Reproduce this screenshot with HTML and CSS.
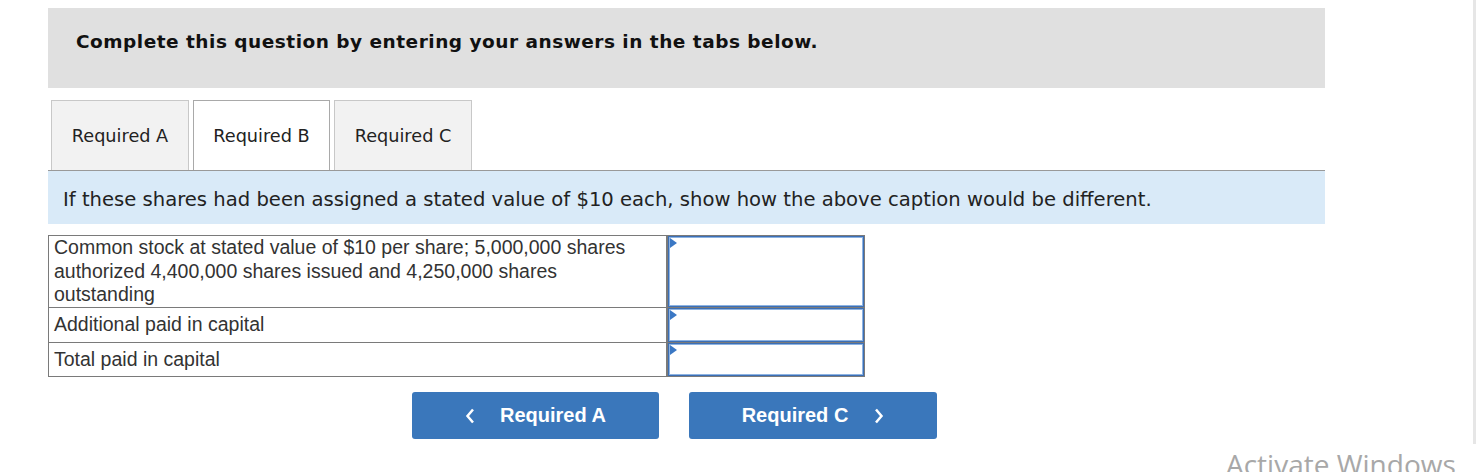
FILE: index.html
```html
<!DOCTYPE html>
<html>
<head>
<meta charset="utf-8">
<link rel="stylesheet" href="styles.css">
</head>
<body>
<div class="page">
  <div class="header">Complete this question by entering your answers in the tabs below.</div>
  <div class="tabs">
    <div class="tab">Required A</div>
    <div class="tab active">Required B</div>
    <div class="tab">Required C</div>
  </div>
  <div class="info">If these shares had been assigned a stated value of $10 each, show how the above caption would be different.</div>
  <table class="grid">
    <tr class="r1">
      <td class="label">Common stock at stated value of $10 per share; 5,000,000 shares authorized 4,400,000 shares issued and 4,250,000 shares outstanding</td>
      <td class="cell"><div class="box"><span class="flag"></span></div></td>
    </tr>
    <tr class="r2">
      <td class="label">Additional paid in capital</td>
      <td class="cell"><div class="box"><span class="flag"></span></div></td>
    </tr>
    <tr class="r3">
      <td class="label">Total paid in capital</td>
      <td class="cell"><div class="box"><span class="flag"></span></div></td>
    </tr>
  </table>
  <div class="nav">
    <button class="btn"><svg class="chev" width="10" height="16" viewBox="0 0 10 16"><path d="M8 1.5 L2.5 8 L8 14.5" fill="none" stroke="#fff" stroke-width="2.5"/></svg><span>Required A</span></button>
    <button class="btn next"><span>Required C</span><svg class="chev" width="10" height="16" viewBox="0 0 10 16"><path d="M2 1.5 L7.5 8 L2 14.5" fill="none" stroke="#fff" stroke-width="2.5"/></svg></button>
  </div>
</div>
<div class="scrolledge"></div>
<div class="watermark">Activate Windows</div>
</body>
</html>
```

FILE: styles.css
```css
html, body {
  margin: 0;
  padding: 0;
  background: #fff;
  overflow: hidden;
}
body {
  width: 1476px;
  height: 472px;
  position: relative;
}
.page {
  padding: 8px 0 0 48px;
  width: 1277px;
}
.header {
  background: #e0e0e0;
  height: 80px;
  box-sizing: border-box;
  padding: 23px 0 0 28px;
  font-family: "DejaVu Sans", Verdana, sans-serif;
  font-weight: bold;
  font-size: 18.5px;
  letter-spacing: 0.5px;
  color: #111;
  white-space: nowrap;
}
.tabs {
  margin-top: 12px;
  display: flex;
  gap: 4px;
  padding-left: 3px;
  border-bottom: 1px solid #999;
  height: 70px;
}
.tab {
  width: 138px;
  box-sizing: border-box;
  border: 1px solid #c8c8c8;
  border-bottom: none;
  background: #f2f2f2;
  display: flex;
  align-items: center;
  justify-content: center;
  font-family: "DejaVu Sans", Verdana, sans-serif;
  font-size: 17.7px;
  color: #222;
}
.tab.active {
  width: 137px;
  background: #fff;
  border-color: #a9a9a9;
}
.info {
  background: #d9eaf8;
  height: 53px;
  box-sizing: border-box;
  padding: 17px 0 0 15px;
  font-family: "DejaVu Sans", Verdana, sans-serif;
  font-size: 19.6px;
  color: #222;
  white-space: nowrap;
}
.grid {
  margin-top: 11px;
  border-collapse: collapse;
  font-family: "Liberation Sans", Arial, sans-serif;
  font-size: 19.5px;
  color: #333;
}
.grid td {
  border: 1px solid #7a7a7a;
  padding: 0;
  vertical-align: top;
}
.label {
  width: 600px;
  padding: 0 12px 0 5px !important;
  line-height: 23.5px;
}
.r1 .label { height: 71px; }
.r2 .label { height: 34px; line-height: 33px; }
.r3 .label { height: 33px; line-height: 32px; }
.cell {
  width: 196px;
  border-left-width: 2px !important;
}
.box {
  position: relative;
  box-sizing: border-box;
  border: 1px solid #3c6fb5;
  box-shadow: inset 0 0 0 1px #8db3e2;
  background: #fff;
}
.r1 .box { height: 71px; }
.r2 .box { height: 34px; }
.r3 .box { height: 33px; }
.flag {
  position: absolute;
  left: 1px;
  top: 1px;
  width: 0;
  height: 0;
  border-top: 5px solid transparent;
  border-bottom: 5px solid transparent;
  border-left: 7px solid #3b78c4;
}
.nav {
  margin-top: 15px;
  margin-left: 364px;
  display: flex;
  gap: 30px;
}
.btn {
  width: 247px;
  height: 47px;
  background: #3a77bb;
  border: none;
  border-radius: 3px;
  color: #fff;
  font-family: "Liberation Sans", Arial, sans-serif;
  font-weight: bold;
  font-size: 20px;
  display: flex;
  align-items: center;
  justify-content: center;
  gap: 25px;
  padding: 0;
}
.btn.next {
  width: 248px;
  gap: 26px;
}
.chev { display: block; }
.scrolledge {
  position: absolute;
  right: 0;
  top: 0;
  width: 3px;
  height: 444px;
  background: #e6e6e6;
}
.watermark {
  position: absolute;
  left: 1226px;
  top: 450px;
  font-family: "Open Sans", "Noto Sans", sans-serif;
  font-size: 28px;
  line-height: 1;
  color: #a8a8a8;
  white-space: nowrap;
}
```
